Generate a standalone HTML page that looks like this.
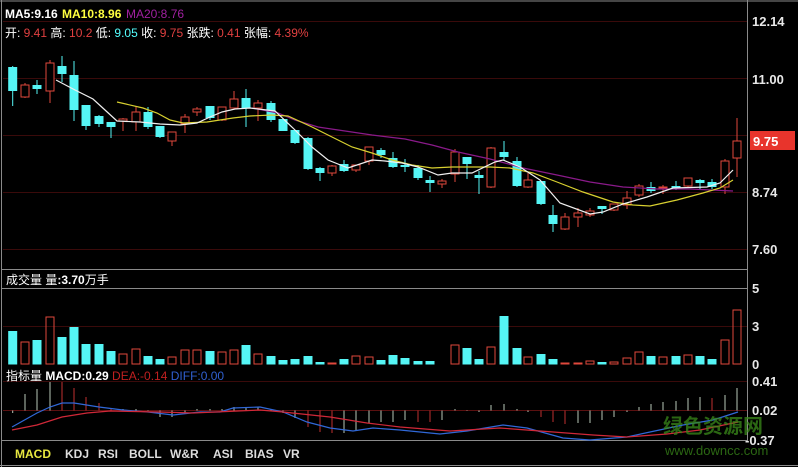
<!DOCTYPE html>
<html><head><meta charset="utf-8"><style>
html,body{margin:0;padding:0;background:#000;width:798px;height:467px;overflow:hidden}
svg{display:block}
text{font-family:"Liberation Sans","Noto Sans CJK SC",sans-serif;font-size:12px}
.ax{font-weight:bold;font-size:13px;fill:#e8e8e8}
</style></head><body>
<svg id="s" width="798" height="467" viewBox="0 0 798 467" xmlns="http://www.w3.org/2000/svg">
<rect width="798" height="467" fill="#000"/>
<g stroke="#3a0a0a" stroke-width="1">
<line x1="3" y1="21.5" x2="747" y2="21.5"/>
<line x1="3" y1="78.5" x2="747" y2="78.5"/>
<line x1="3" y1="135.5" x2="747" y2="135.5"/>
<line x1="3" y1="192.5" x2="747" y2="192.5"/>
<line x1="3" y1="249.5" x2="747" y2="249.5"/>
<line x1="3" y1="326.5" x2="747" y2="326.5"/>
<line x1="3" y1="381.5" x2="747" y2="381.5"/>
<line x1="3" y1="410.5" x2="747" y2="410.5" stroke="#5a1010"/>
</g>
<g stroke="#8a8a8a" stroke-width="1">
<line x1="0" y1="1" x2="798" y2="1"/>
<line x1="1.5" y1="0" x2="1.5" y2="467"/>
<line x1="747.5" y1="0" x2="747.5" y2="441"/>
<line x1="2" y1="269.5" x2="747" y2="269.5"/>
<line x1="2" y1="288.5" x2="747" y2="288.5"/>
<line x1="2" y1="440.5" x2="747" y2="440.5"/>
<line x1="0" y1="465.5" x2="798" y2="465.5"/>
</g>
<g id="c"></g>
<text x="5" y="18" style="font-weight:bold" fill="#ffffff">MA5:9.16</text>
<text x="62" y="18" style="font-weight:bold" fill="#ffff40">MA10:8.96</text>
<text x="126" y="18" fill="#a020a0">MA20:8.76</text>
<text x="5" y="37" fill="#fff">开: <tspan fill="#e04040">9.41</tspan> 高: <tspan fill="#e04040">10.2</tspan> 低: <tspan fill="#5ff">9.05</tspan> 收: <tspan fill="#e04040">9.75</tspan> 张跌: <tspan fill="#e04040">0.41</tspan> 张幅: <tspan fill="#e04040">4.39%</tspan></text>
<text x="6" y="284" fill="#fff">成交量 量<tspan style="font-weight:bold">:3.70</tspan>万手</text>
<text x="6" y="380" fill="#fff">指标量 <tspan style="font-weight:bold">MACD:0.29</tspan> <tspan fill="#c02020">DEA:-0.14</tspan> <tspan fill="#3060d0">DIFF:0.00</tspan></text>
<text class="ax" x="752" y="26">12.14</text>
<text class="ax" x="752" y="84">11.00</text>
<rect x="750" y="131" width="45" height="19" fill="#e8342c"/>
<text class="ax" x="753" y="146" fill="#fff" style="fill:#fff">9.75</text>
<text class="ax" x="752" y="197">8.74</text>
<text class="ax" x="752" y="254">7.60</text>
<text class="ax" x="752" y="293">5</text>
<text class="ax" x="752" y="331">3</text>
<text class="ax" x="752" y="369">0</text>
<text class="ax" x="752" y="386">0.41</text>
<text class="ax" x="752" y="415">0.02</text>
<text class="ax" x="745" y="445">-0.37</text>
<text x="663" y="433" style="font-size:20px;font-weight:bold" fill="#3a8a1a" fill-opacity="0.75">绿色资源网</text>
<text x="665" y="455" style="font-size:13px" fill="#3a8a1a" fill-opacity="0.75">www.downcc.com</text>
<g style="font-size:12.5px;font-weight:bold">
<text x="15" y="458" fill="#e8e840">MACD</text>
<text x="65" y="458" fill="#ddd">KDJ</text>
<text x="98" y="458" fill="#ddd">RSI</text>
<text x="129" y="458" fill="#ddd">BOLL</text>
<text x="170" y="458" fill="#ddd">W&amp;R</text>
<text x="213" y="458" fill="#ddd">ASI</text>
<text x="245" y="458" fill="#ddd">BIAS</text>
<text x="283" y="458" fill="#ddd">VR</text>
</g>
</svg>
<script>
var R="#e0483c",C="#55f5f5";
// x, bodyTop, bodyBot, wickTop, wickBot, red?
var K=[[12.7,67,91,66,106,0],[25,85,97,83,98,1],[37,85,89,80,94,0],[50,63,91,60,103,1],[62,66,74,56,82,0],[74,75,110,61,121,0],[86,105,126,105,130,0],[99,116,124,115,127,0],[111,122,127,122,138,0],[123,119,121,118,131,1],[136,112,122,106,131,1],[148,112,127,107,129,0],[160,126,137,126,138,0],[172,132,141,132,146,1],[185,117,124,114,133,1],[197,109,112,107,116,1],[210,106,118,106,120,0],[222,107,120,107,121,1],[234,99,108,91,108,1],[246,98,108,89,127,0],[258,103,108,100,121,1],[271,103,120,101,122,0],[283,119,131,119,131,0],[295,130,143,130,144,0],[308,138,169,137,170,0],[320,168,173,167,181,0],[332,166,173,165,176,1],[344,164,171,160,172,0],[356,165,170,165,172,1],[369,147,161,147,165,1],[381,150,155,148,158,0],[393,158,167,152,168,0],[405,165,167,159,172,0],[418,168,178,165,180,0],[430,180,183,176,192,0],[442,181,184,179,188,1],[455,152,174,149,182,1],[467,157,164,157,179,0],[479,175,178,171,194,0],[491,148,187,147,188,1],[504,152,157,141,161,0],[517,161,186,157,187,0],[528,180,187,173,188,1],[541,181,204,181,205,0],[553,215,224,205,232,0],[565,217,229,213,230,1],[578,213,217,208,227,1],[590,211,215,208,217,1],[602,206,209,206,214,0],[614,204,210,204,211,1],[627,198,205,191,209,1],[639,186,195,184,197,1],[651,187,191,182,193,0],[663,187,188,185,194,1],[676,186,188,181,190,0],[688,178,186,178,187,1],[700,180,183,179,189,0],[712,182,187,179,189,0],[725,161,187,159,194,1],[737,141,158,118,177,1]];
var V=[331,342,340,317,337,327,344,344,351,354,349,356,359,357,350,350,351,352,350,345,354,356,360,359,356,362,363,359,356,357,360,355,358,361,361,364,345,348,359,347,316,348,357,354,359,363,363,361,362,362,358,352,356,357,356,355,356,359,340,310];
var Vr=[0,1,0,1,0,0,0,0,0,1,1,0,0,1,1,1,0,1,1,0,1,0,0,0,0,0,1,0,1,1,0,0,0,0,0,1,1,0,0,1,0,0,1,0,0,1,1,1,0,1,1,1,0,1,0,1,0,0,1,1];
var M=[413,394,389,382,382,388,397,403,408,409,409,410,417,417,414,409,409,409,407,407,407,409,413,418,427,432,433,433,430,423,422,422,420,422,422,420,409,410,412,405,404,409,412,417,422,424,423,423,420,417,412,407,404,402,401,398,397,398,395,388];
var Mr=[0,0,0,0,1,1,1,1,1,0,0,0,0,0,0,0,0,0,0,0,0,0,0,0,1,1,1,0,0,0,0,0,0,1,1,0,0,0,0,0,0,0,0,1,1,1,0,0,0,0,0,0,0,0,0,0,0,1,0,0];
var h="";
for(var i=0;i<60;i++){var k=K[i],x=k[0],col=k[5]?R:C;
 var vx=12.7+i*12.2; if(i<K.length)vx=k[0];
 // volume
 if(Vr[i])h+='<rect x="'+(vx-4)+'" y="'+V[i]+'" width="8" height="'+(364-V[i])+'" fill="none" stroke="'+R+'"/>';
 else h+='<rect x="'+(vx-4.5)+'" y="'+V[i]+'" width="9" height="'+(364.5-V[i])+'" fill="'+C+'"/>';
 // macd
 h+='<line x1="'+vx+'" y1="410.5" x2="'+vx+'" y2="'+M[i]+'" stroke="'+(Mr[i]?"#c03030":"#b8c8b8")+'"/>';
 // candle
 h+='<line x1="'+x+'" y1="'+k[3]+'" x2="'+x+'" y2="'+k[4]+'" stroke="'+col+'"/>';
 if(k[5])h+='<rect x="'+(x-4)+'" y="'+k[1]+'" width="8" height="'+Math.max(1,k[2]-k[1])+'" fill="#000" stroke="'+R+'"/>';
 else h+='<rect x="'+(x-4.5)+'" y="'+k[1]+'" width="9" height="'+Math.max(2,k[2]-k[1])+'" fill="'+C+'"/>';
}
function pl(p,c){return '<polyline fill="none" stroke="'+c+'" stroke-width="1.2" points="'+p+'"/>';}
h+=pl("252,108 278,113 295,120 318,127 345,131 372,135 405,139 432,145 458,152 490,159 523,168 557,175 590,182 623,187 657,189 690,189 733,191","#8a1a8a");
h+=pl("117,102 143,108 157,113 170,120 183,123 207,122 233,118 250,116 272,115 288,116 312,127 332,137 352,147 372,153 392,160 412,165 432,168 452,167 490,167 510,168 533,173 557,182 583,192 613,202 633,205 650,206 677,200 703,193 720,188 733,180","#d8d030");
h+=pl("56,80 75,90 93,99 105,110 117,121 140,122 160,124 180,125 197,123 210,117 222,112 235,109 250,108 275,111 295,130 312,147 328,160 348,168 372,160 385,161 402,163 418,167 438,175 452,173 472,173 495,162 503,160 520,167 540,180 560,203 590,214 603,212 623,204 647,197 673,188 707,187 720,183 733,170","#f0f0f0");
h+=pl("12,427 37,413 50,407 62,403 74,403 99,407 123,410 148,412 173,415 200,412 220,412 233,408 260,407 283,412 307,422 330,428 353,431 373,428 400,430 440,434 467,431 503,425 527,428 563,438 590,440 627,437 650,432 683,425 713,420 738,412","#3068d8");
h+=pl("12,430 37,425 62,417 87,413 110,411 160,412 193,413 260,410 283,412 330,417 367,423 400,427 450,431 500,428 540,431 593,435 627,437 667,434 700,430 738,422","#d02838");
document.getElementById("c").innerHTML=h;
</script>
</body></html>
